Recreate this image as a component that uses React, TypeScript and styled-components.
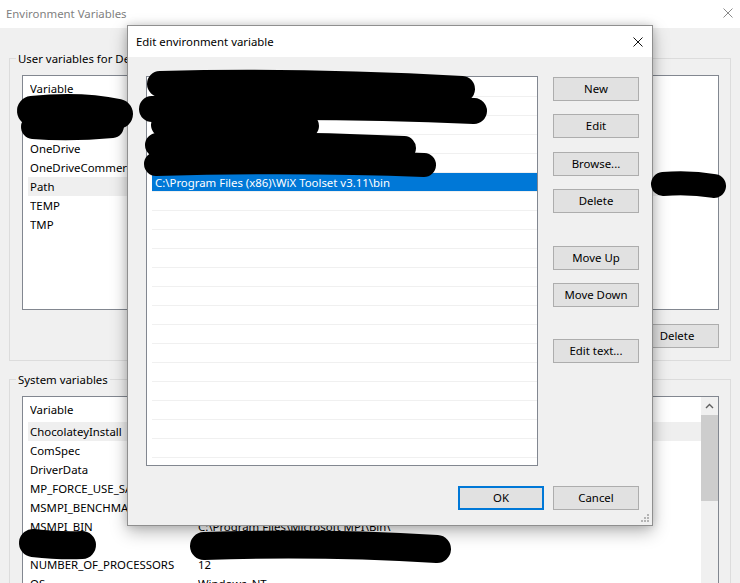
import React from "react";
import styled, { createGlobalStyle } from "styled-components";

const FONT = `"Segoe UI", "Noto Sans", "Open Sans", sans-serif`;
const FS = "11.4px";

const GlobalStyle = createGlobalStyle`
  html, body { margin: 0; padding: 0; background: #fff; }
  body { font-family: ${FONT}; font-size: ${FS}; color: #000; }
  * { box-sizing: border-box; }
`;

const Screen = styled.div`
  position: relative;
  width: 740px;
  height: 583px;
  overflow: hidden;
  background: #f0f0f0;
  display: flex;
  flex-direction: column;
`;

const BgTitleBar = styled.div`
  height: 28px;
  flex-shrink: 0;
  background: #fff;
  display: flex;
  align-items: center;
  justify-content: space-between;
  padding: 0 7px 2px 6px;
  color: #7f7f7f;
`;

const BgBody = styled.div`
  flex: 1;
  padding: 22px 9px 0 9px;
  display: flex;
  flex-direction: column;
`;

const Group = styled.fieldset<{ $mt?: number }>`
  margin: ${(p) => p.$mt ?? 0}px 0 0 0;
  border: 1px solid #dcdcdc;
  padding: 9px 11px 12px 12px;
  min-width: 0;
  display: flex;
  flex-direction: column;
`;

const Legend = styled.legend`
  margin-left: -6px;
  padding: 1px 2px 0 2px;
  line-height: 15px;
  font-size: ${FS};
`;

const ListView = styled.div<{ $h: number }>`
  height: ${(p) => p.$h}px;
  border: 1px solid #828790;
  background: #fff;
  display: flex;
  overflow: hidden;
  flex-shrink: 0;
`;

const ListContent = styled.div`
  flex: 1;
  min-width: 0;
  display: flex;
  flex-direction: column;
`;

const HeaderRow = styled.div`
  height: 25px;
  flex-shrink: 0;
  display: grid;
  grid-template-columns: 168px 1fr;
  align-items: center;
  padding-left: 7px;
  white-space: nowrap;
`;

const VarRow = styled.div<{ $hl?: boolean }>`
  height: 19px;
  flex-shrink: 0;
  margin-left: 5px;
  padding-left: 2px;
  display: grid;
  grid-template-columns: 168px 1fr;
  align-items: center;
  white-space: nowrap;
  overflow: hidden;
  background: ${(p) => (p.$hl ? "#efefef" : "transparent")};
`;

const Cell = styled.span`
  overflow: hidden;
`;

const Scrollbar = styled.div`
  width: 17px;
  flex-shrink: 0;
  background: #f0f0f0;
  display: flex;
  flex-direction: column;
`;

const ScrollArrow = styled.div`
  height: 17px;
  display: flex;
  align-items: center;
  justify-content: center;
`;

const ScrollThumb = styled.div`
  margin-top: 1px;
  height: 86px;
  background: #cdcdcd;
`;

const ButtonRow = styled.div`
  margin-top: 14px;
  display: flex;
  justify-content: flex-end;
  gap: 9px;
`;

const WinButton = styled.button<{ $w?: number; $mt?: number; $default?: boolean }>`
  width: ${(p) => p.$w ?? 86}px;
  height: 24px;
  margin: ${(p) => p.$mt ?? 0}px 0 0 0;
  padding: 0 0 1px 0;
  font-family: ${FONT};
  font-size: ${FS};
  color: #000;
  background: #e1e1e1;
  border: ${(p) => (p.$default ? "2px solid #0078d7" : "1px solid #adadad")};
  flex-shrink: 0;
  display: flex;
  align-items: center;
  justify-content: center;
`;

/* ---------- Dialog ---------- */

const Dialog = styled.div`
  position: absolute;
  left: 127px;
  top: 25px;
  width: 526px;
  height: 501px;
  border: 1px solid #8f8f8f;
  background: #f0f0f0;
  box-shadow: 0 6px 16px rgba(0, 0, 0, 0.28), 0 0 8px rgba(0, 0, 0, 0.14);
  display: flex;
  flex-direction: column;
`;

const DlgTitleBar = styled.div`
  height: 31px;
  flex-shrink: 0;
  background: #fff;
  display: flex;
  align-items: center;
  justify-content: space-between;
  padding: 0 9px 0 8px;
`;

const DlgBody = styled.div`
  flex: 1;
  padding: 19px 13px 0 18px;
  display: flex;
  flex-direction: column;
`;

const DlgMain = styled.div`
  display: flex;
  gap: 15px;
`;

const PathList = styled.div`
  width: 392px;
  height: 390px;
  border: 1px solid #828790;
  background: #fff;
  padding: 1px 0 0 5px;
  overflow: hidden;
  display: flex;
  flex-direction: column;
`;

const PathRow = styled.div<{ $sel?: boolean }>`
  height: 19px;
  flex-shrink: 0;
  border-bottom: 1px solid #f0f0f0;
  padding-left: 3px;
  display: flex;
  align-items: center;
  white-space: nowrap;
  background: ${(p) => (p.$sel ? "#0078d7" : "transparent")};
  color: ${(p) => (p.$sel ? "#fff" : "#000")};
`;

const BtnColumn = styled.div`
  display: flex;
  flex-direction: column;
  padding-top: 1px;
`;

const DlgFooter = styled.div`
  margin-top: 20px;
  display: flex;
  justify-content: flex-end;
  gap: 9px;
`;

const Grip = styled.svg`
  position: absolute;
  right: 1px;
  bottom: 1px;
`;

const Redactions = styled.svg`
  position: absolute;
  left: 0;
  top: 0;
  pointer-events: none;
`;

const CloseX = ({ color }: { color: string }) => (
  <svg width="10" height="10" viewBox="0 0 10 10">
    <path d="M0.5 0.5 L9.5 9.5 M9.5 0.5 L0.5 9.5" stroke={color} strokeWidth="1" />
  </svg>
);

const userVars: [string, string, boolean?][] = [
  ["", ""],
  ["", ""],
  ["OneDrive", "C:\\Users\\dev\\OneDrive"],
  ["OneDriveCommercial", "C:\\Users\\dev\\OneDrive"],
  ["Path", "", true],
  ["TEMP", "%USERPROFILE%\\AppData\\Local\\Temp"],
  ["TMP", "%USERPROFILE%\\AppData\\Local\\Temp"],
];

const sysVars: [string, string, boolean?][] = [
  ["ChocolateyInstall", "C:\\ProgramData\\chocolatey", true],
  ["ComSpec", "C:\\WINDOWS\\system32\\cmd.exe"],
  ["DriverData", "C:\\Windows\\System32\\Drivers\\DriverData"],
  ["MP_FORCE_USE_SANDBOX", "0"],
  ["MSMPI_BENCHMARKS", "C:\\Program Files\\Microsoft MPI\\Benchmarks\\"],
  ["MSMPI_BIN", "C:\\Program Files\\Microsoft MPI\\Bin\\"],
  ["", ""],
  ["NUMBER_OF_PROCESSORS", "12"],
  ["OS", "Windows_NT"],
  ["Path", "C:\\WINDOWS\\system32"],
];

const SELECTED = 5;
const paths: string[] = Array.from({ length: 21 }, (_, i) =>
  i === SELECTED ? "C:\\Program Files (x86)\\WiX Toolset v3.11\\bin" : ""
);

const dlgButtons: [string, number][] = [
  ["New", 0],
  ["Edit", 13],
  ["Browse...", 14],
  ["Delete", 13],
  ["Move Up", 33],
  ["Move Down", 13],
  ["Edit text...", 32],
];

export default function App() {
  return (
    <>
      <GlobalStyle />
      <Screen>
        <BgTitleBar>
          <span>Environment Variables</span>
          <CloseX color="#8a8a8a" />
        </BgTitleBar>
        <BgBody>
          <Group>
            <Legend>User variables for Dev</Legend>
            <ListView $h={235}>
              <ListContent>
                <HeaderRow>
                  <Cell>Variable</Cell>
                  <Cell>Value</Cell>
                </HeaderRow>
                {userVars.map(([n, v, hl], i) => (
                  <VarRow key={i} $hl={hl}>
                    <Cell>{n}</Cell>
                    <Cell>{v}</Cell>
                  </VarRow>
                ))}
              </ListContent>
            </ListView>
            <ButtonRow>
              <WinButton $w={84}>New...</WinButton>
              <WinButton $w={84}>Edit...</WinButton>
              <WinButton $w={84}>Delete</WinButton>
            </ButtonRow>
          </Group>
          <Group $mt={10}>
            <Legend>System variables</Legend>
            <ListView $h={300}>
              <ListContent>
                <HeaderRow>
                  <Cell>Variable</Cell>
                  <Cell>Value</Cell>
                </HeaderRow>
                {sysVars.map(([n, v, hl], i) => (
                  <VarRow key={i} $hl={hl}>
                    <Cell>{n}</Cell>
                    <Cell>{v}</Cell>
                  </VarRow>
                ))}
              </ListContent>
              <Scrollbar>
                <ScrollArrow>
                  <svg width="9" height="6" viewBox="0 0 9 6">
                    <path d="M1 5 L4.5 1.5 L8 5" fill="none" stroke="#606060" strokeWidth="1.4" />
                  </svg>
                </ScrollArrow>
                <ScrollThumb />
              </Scrollbar>
            </ListView>
          </Group>
        </BgBody>

        <Dialog>
          <DlgTitleBar>
            <span>Edit environment variable</span>
            <CloseX color="#111" />
          </DlgTitleBar>
          <DlgBody>
            <DlgMain>
              <PathList>
                {paths.map((p, i) => (
                  <PathRow key={i} $sel={i === SELECTED}>
                    {p}
                  </PathRow>
                ))}
              </PathList>
              <BtnColumn>
                {dlgButtons.map(([label, mt]) => (
                  <WinButton key={label} $mt={mt}>
                    {label}
                  </WinButton>
                ))}
              </BtnColumn>
            </DlgMain>
            <DlgFooter>
              <WinButton $default>OK</WinButton>
              <WinButton>Cancel</WinButton>
            </DlgFooter>
          </DlgBody>
          <Grip width="12" height="12" viewBox="0 0 12 12">
            <g fill="#b4b4b4">
              <rect x="8" y="2" width="2" height="2" />
              <rect x="5" y="5" width="2" height="2" />
              <rect x="8" y="5" width="2" height="2" />
              <rect x="2" y="8" width="2" height="2" />
              <rect x="5" y="8" width="2" height="2" />
              <rect x="8" y="8" width="2" height="2" />
            </g>
          </Grip>
        </Dialog>

        <Redactions width="740" height="583" viewBox="0 0 740 583">
          <g stroke="#000" strokeLinecap="round" strokeLinejoin="round" fill="none">
            <path d="M32 111 Q80 106 118 114" strokeWidth="30" />
            <path d="M33 127 Q70 130 112 126" strokeWidth="24" />
            <path d="M160 84 Q300 80 462 89" strokeWidth="26" />
            <path d="M152 109 Q320 104 474 111" strokeWidth="26" />
            <path d="M163 125 Q240 128 307 126" strokeWidth="24" />
            <path d="M157 145 Q280 142 404 148" strokeWidth="24" />
            <path d="M156 164 Q300 160 424 165" strokeWidth="24" />
            <path d="M663 184 Q690 182 714 186" strokeWidth="24" />
            <path d="M33 543 Q60 546 82 545" strokeWidth="28" />
            <path d="M204 546 Q320 542 437 549" strokeWidth="28" />
          </g>
        </Redactions>
      </Screen>
    </>
  );
}
